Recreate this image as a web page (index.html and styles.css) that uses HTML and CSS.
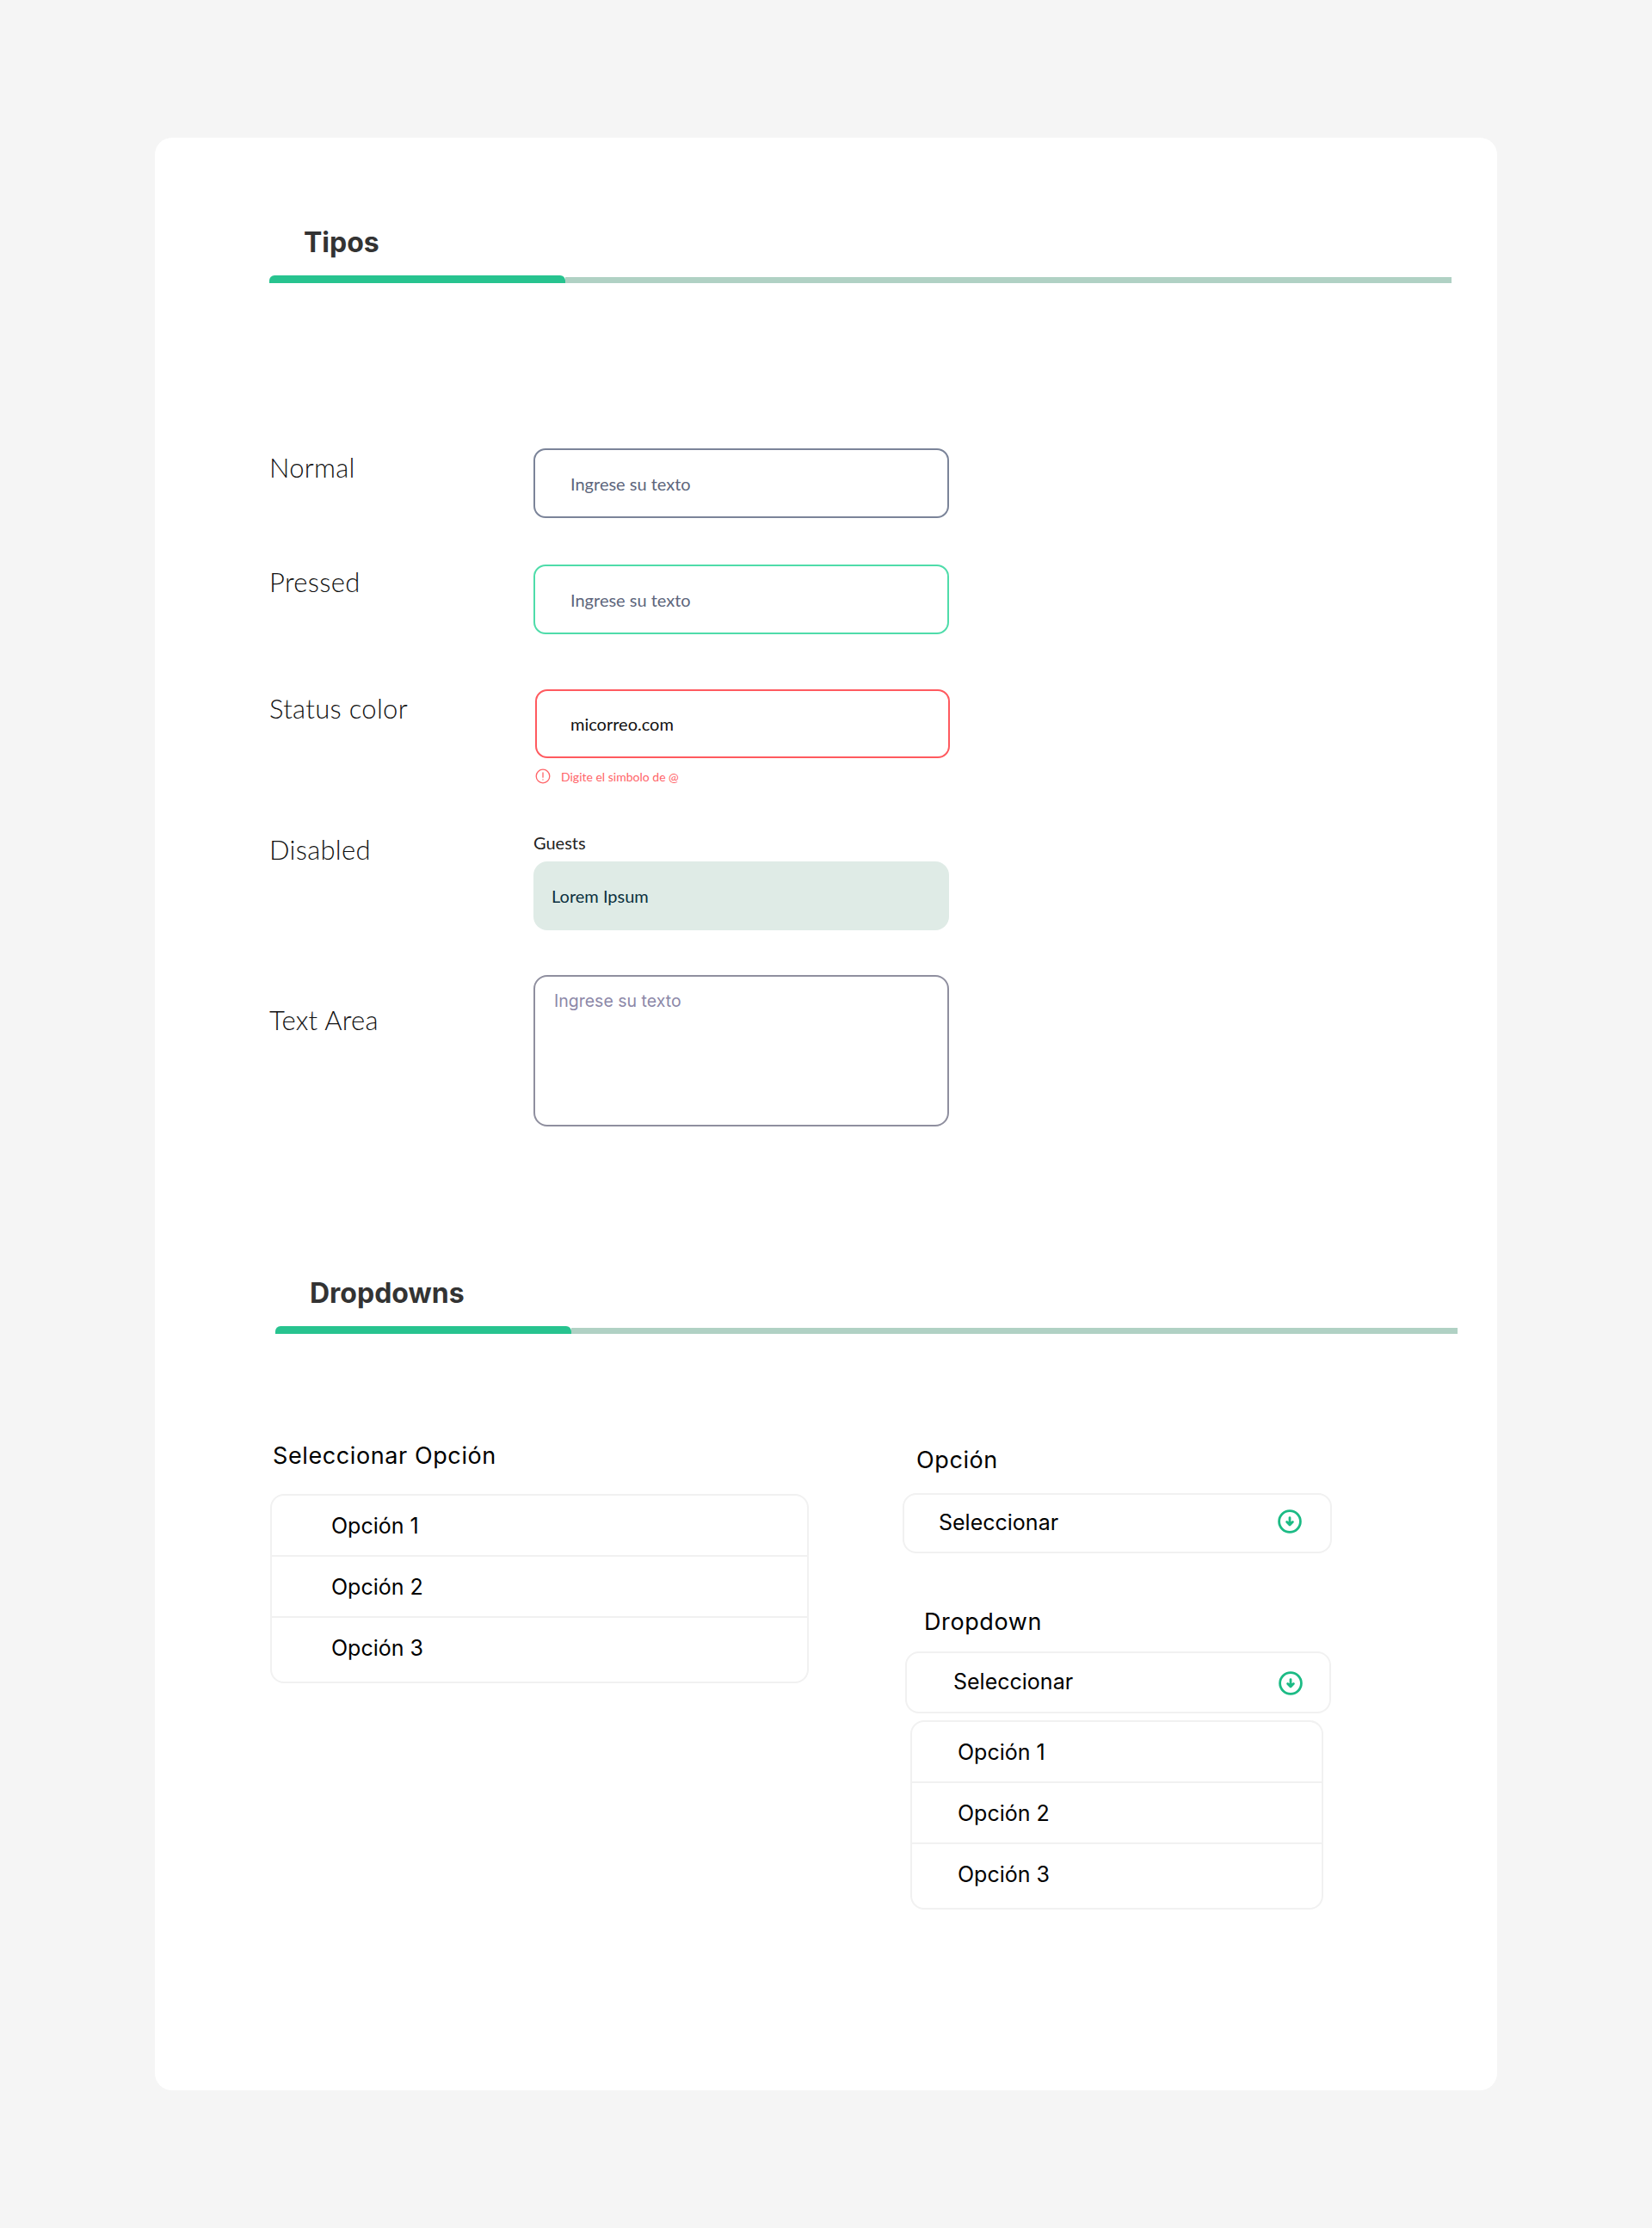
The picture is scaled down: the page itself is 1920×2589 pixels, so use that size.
FILE: index.html
```html
<!DOCTYPE html>
<html lang="es">
<head>
    <meta charset="UTF-8">
    <meta name="viewport" content="width=device-width, initial-scale=1.0">
    <title>Tipos y Dropdowns</title>
    <link rel="stylesheet" href="styles.css">
</head>
<body>
    <div class="card">
        <div class="section-head">
            <h2>Tipos</h2>
            <div class="bar"><div class="bar-fill"></div><div class="bar-rest"></div></div>
        </div>

        <div class="types">
            <div class="type-row row-normal">
                <div class="type-label">Normal</div>
                <div class="input input-normal">Ingrese su texto</div>
            </div>
            <div class="type-row row-pressed">
                <div class="type-label">Pressed</div>
                <div class="input input-pressed">Ingrese su texto</div>
            </div>
            <div class="type-row row-status">
                <div class="type-label">Status color</div>
                <div class="status-field">
                    <div class="input input-error">micorreo.com</div>
                    <div class="error-msg">
                        <svg class="error-icon" viewBox="0 0 18 18" fill="none" stroke="#ff6468" stroke-width="1.3" stroke-linecap="round">
                            <circle cx="9" cy="9" r="7.8"/>
                            <path d="M9 4.8v5.4M9 12.9v.2"/>
                        </svg>
                        <span>Digite el simbolo de @</span>
                    </div>
                </div>
            </div>
            <div class="type-row row-disabled">
                <div class="type-label">Disabled</div>
                <div>
                    <div class="guests">Guests</div>
                    <div class="input input-disabled">Lorem Ipsum</div>
                </div>
            </div>
            <div class="type-row row-area">
                <div class="type-label">Text Area</div>
                <div class="textarea">Ingrese su texto</div>
            </div>
        </div>

        <div class="section-head head-dropdowns">
            <h2>Dropdowns</h2>
            <div class="bar"><div class="bar-fill"></div><div class="bar-rest"></div></div>
        </div>

        <div class="dropdowns">
            <div class="col-left">
                <div class="dd-label label-select">Seleccionar Opción</div>
                <ul class="options options-wide">
                    <li>Opción 1</li>
                    <li>Opción 2</li>
                    <li>Opción 3</li>
                </ul>
            </div>
            <div class="col-right">
                <div class="dd-label label-option">Opción</div>
                <div class="select select-one">
                    <span>Seleccionar</span>
                    <svg class="arrow" viewBox="0 0 28 28" fill="none" stroke="#1cbb85" stroke-width="2.8" stroke-linecap="round" stroke-linejoin="round">
                        <circle cx="14" cy="14" r="12.4"/>
                        <path d="M14 9.6v8.2M10.6 14.6l3.4 3.4 3.4-3.4"/>
                    </svg>
                </div>
                <div class="dd-label label-dropdown">Dropdown</div>
                <div class="select select-two">
                    <span>Seleccionar</span>
                    <svg class="arrow" viewBox="0 0 28 28" fill="none" stroke="#1cbb85" stroke-width="2.8" stroke-linecap="round" stroke-linejoin="round">
                        <circle cx="14" cy="14" r="12.4"/>
                        <path d="M14 9.6v8.2M10.6 14.6l3.4 3.4 3.4-3.4"/>
                    </svg>
                </div>
                <ul class="options options-narrow">
                    <li>Opción 1</li>
                    <li>Opción 2</li>
                    <li>Opción 3</li>
                </ul>
            </div>
        </div>
    </div>
</body>
</html>
```

FILE: styles.css
```css
* {
    box-sizing: border-box;
}
body {
    margin: 0;
    background: #f5f5f5;
    font-family: 'Inter', 'Noto Sans', sans-serif;
    color: #000;
}
.card {
    width: 1560px;
    height: 2269px;
    margin: 160px 180px;
    padding-top: 99px;
    background: #fff;
    border-radius: 20px;
}

/* headings with the green bar */
.section-head {
    width: 1374px;
    margin-left: 133px;
}
.section-head h2 {
    margin: 0 0 16px 40px;
    font-family: 'Inter', sans-serif;
    font-size: 32px;
    line-height: 45px;
    font-weight: 700;
    color: #333;
}
.bar {
    display: flex;
    align-items: flex-end;
    height: 9px;
}
.bar-fill {
    width: 344px;
    height: 9px;
    background: #27c38f;
    border-radius: 6px 6px 0 0;
}
.bar-rest {
    flex: 1;
    height: 7px;
    background: #b0d1c4;
}
.head-dropdowns {
    margin-left: 140px;
    margin-top: 171px;
}

/* input types */
.types {
    margin-left: 133px;
}
.type-row {
    display: grid;
    grid-template-columns: 307px 483px;
}
.type-label {
    font-family: 'Lato', sans-serif;
    font-size: 31px;
    font-weight: 300;
    letter-spacing: 0.3px;
    line-height: 40px;
    color: #111;
}
.row-normal {
    margin-top: 192px;
}
.row-normal .type-label {
    padding-top: 2px;
}
.row-pressed {
    margin-top: 54px;
}
.row-status {
    margin-top: 64px;
}
.row-status .type-label {
    padding-top: 2px;
}
.row-disabled {
    margin-top: 55px;
}
.row-area {
    margin-top: 52px;
}
.row-area .type-label {
    padding-top: 32px;
}
.input {
    display: flex;
    align-items: center;
    width: 483px;
    height: 81px;
    padding-left: 41px;
    border: 2px solid #7b8499;
    border-radius: 14px;
    font-family: 'Lato', sans-serif;
    font-size: 20px;
    color: #5d667c;
}
.input-pressed {
    border-color: #4fdcaa;
}
.input-error {
    width: 482px;
    margin-left: 2px;
    height: 80px;
    padding-left: 39px;
    border-color: #ff5a5f;
    color: #111;
}
.error-msg {
    display: flex;
    align-items: center;
    gap: 12px;
    margin: 12px 0 1px 2px;
    font-family: 'Lato', sans-serif;
    font-size: 14px;
    color: #ff6468;
}
.error-icon {
    width: 18px;
    height: 18px;
}
.guests {
    font-family: 'Lato', sans-serif;
    font-size: 20px;
    line-height: 24px;
    margin-bottom: 10px;
    color: #222;
}
.input-disabled {
    height: 80px;
    padding-left: 21px;
    border: none;
    background: #dfebe6;
    border-radius: 16px;
    color: #0c3040;
}
.textarea {
    width: 483px;
    height: 176px;
    padding: 13px 0 0 22px;
    border: 2px solid #8f8f9f;
    border-radius: 16px;
    font-size: 19.5px;
    line-height: 30px;
    color: #8c88a8;
}

/* dropdowns */
.dropdowns {
    display: flex;
    margin-left: 134px;
}
.col-left {
    width: 626px;
}
.col-right {
    width: 499px;
    margin-left: 109px;
}
.dd-label {
    font-size: 27px;
    letter-spacing: 0.6px;
    line-height: 36px;
}
.label-select {
    margin: 124px 0 0 3px;
}
.label-option {
    margin: 129px 0 0 16px;
}
.label-dropdown {
    margin: 62px 0 0 25px;
}
.options {
    list-style: none;
    margin: 0;
    padding: 0;
    height: 220px;
    border: 2px solid #f1f1f1;
    border-radius: 16px;
    font-size: 25px;
}
.options li {
    display: flex;
    align-items: center;
    height: 71px;
    border-bottom: 2px solid #f1f1f1;
}
.options li:last-child {
    height: 75px;
    padding-bottom: 5px;
    border-bottom: none;
}
.options-wide {
    width: 626px;
    margin-top: 26px;
}
.options-wide li {
    padding-left: 69px;
}
.options-narrow {
    width: 480px;
    margin: 8px 0 0 9px;
}
.options-narrow li {
    padding-left: 53px;
}
.select {
    display: flex;
    align-items: center;
    justify-content: space-between;
    border: 2px solid #f1f1f1;
    border-radius: 16px;
    font-size: 25px;
}
.select span {
    margin-top: -2px;
}
.select-one {
    width: 499px;
    height: 70px;
    margin-top: 20px;
    padding: 0 33px 0 40px;
}
.select-two {
    width: 495px;
    height: 72px;
    margin: 16px 0 0 3px;
    padding: 0 31px 0 54px;
}
.arrow {
    width: 28px;
    height: 28px;
}
.select-one .arrow {
    margin-top: -4px;
}
.select-two .arrow {
    margin-top: 2px;
}
```
